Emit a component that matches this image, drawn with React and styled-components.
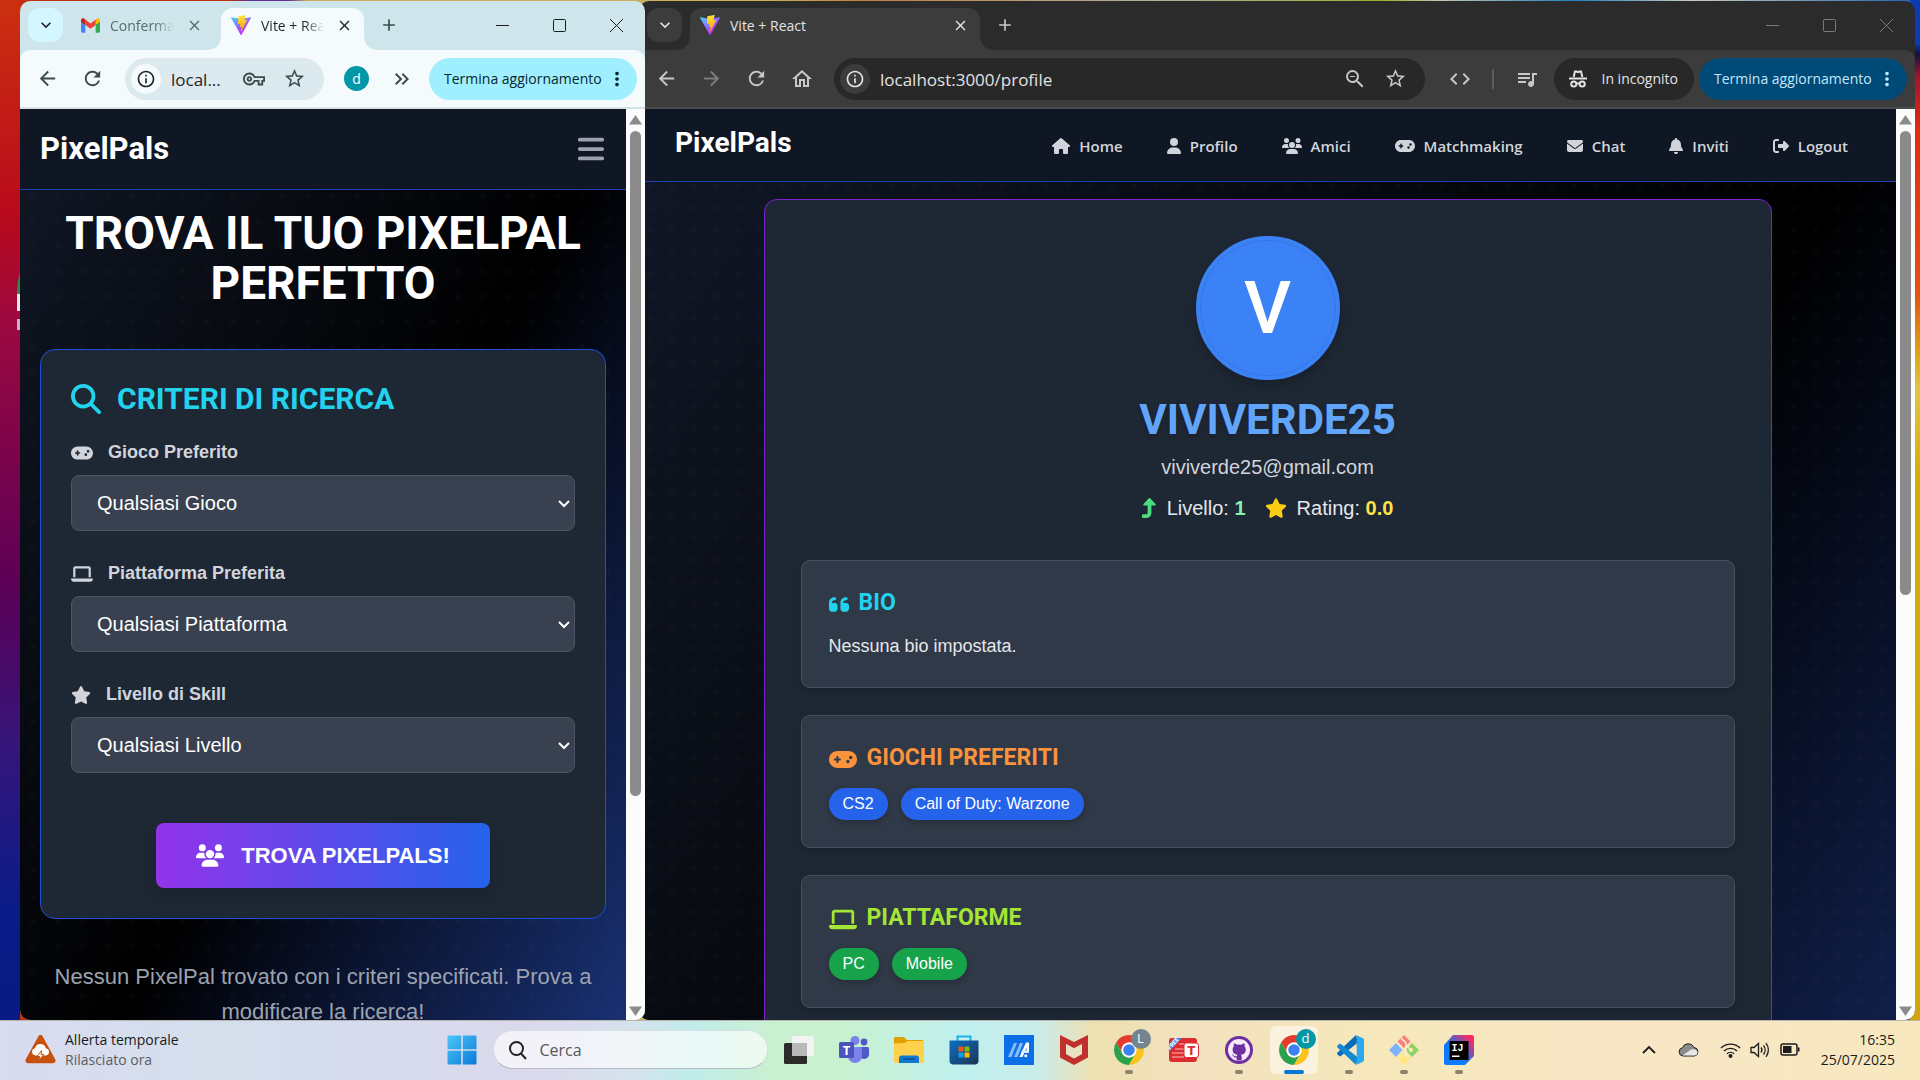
import React from 'react';
import styled, { createGlobalStyle, css } from 'styled-components';
import {
  FaHouse, FaUser, FaUsers, FaGamepad, FaEnvelope, FaBell, FaRightFromBracket,
  FaMagnifyingGlass, FaLaptop, FaStar, FaTurnUp, FaQuoteLeft, FaBars,
} from 'react-icons/fa6';
import {
  MdArrowBack, MdArrowForward, MdRefresh, MdOutlineHome, MdInfoOutline, MdStarBorder,
  MdOutlineVpnKey, MdKeyboardDoubleArrowRight, MdMoreVert, MdZoomOut, MdCode,
  MdQueueMusic, MdClose, MdAdd, MdExpandMore,
} from 'react-icons/md';
import { FaGithub } from 'react-icons/fa';

const ui = '"Open Sans", "Noto Sans", sans-serif';
const body = '"Liberation Sans", Arial, sans-serif';
const display = 'Roboto, "Liberation Sans", sans-serif';

const light = {
  strip: '#cee6eb', bar: '#f5fafd', line: '#d5e3e6', chip: '#d3f6ff', box: '#dce9ee',
  boxChip: '#f5fafd', icon: '#3c4b4f', faint: '#3c4b4f', text: '#1f2628', update: '#a0efff',
  updateText: '#06272e', control: '#1c1c1c',
};
const dark = {
  strip: '#2b2b2b', bar: '#3c3c3c', line: '#4a4c4c', chip: '#3c3c3c', box: '#282828',
  boxChip: '#3c3c3c', icon: '#c7c7c7', faint: '#7d7d7d', text: '#e3e3e3', update: '#004a77',
  updateText: '#c2e7ff', control: '#7a7a7a',
};

const Global = createGlobalStyle`
  *, *::before, *::after { box-sizing: border-box; }
  body { margin: 0; overflow: hidden; }
  button, input, select { font: inherit; color: inherit; border: 0; margin: 0; padding: 0; background: none; }
  button { cursor: pointer; }
  h1, h2, p, ul { margin: 0; padding: 0; }
  ul { list-style: none; }
  a { color: inherit; text-decoration: none; }
  svg { display: block; flex: none; }
`;

const Desktop = styled.div`
  position: relative;
  display: flex;
  flex-direction: column;
  height: 100vh;
  overflow: hidden;
  font-family: ${ui};
  background:
    linear-gradient(#cc3010, #b80a1c 20%, #9c0840 30%, #5c0056 54%, #35157a 69%, #0a1c88 84%, #061880) 0 0 / 20px 100% no-repeat,
    linear-gradient(#0b3cb4 0 4%, #10103c 5%, #a01430 7%, #e22c10 12%, #e65010 27%, #dda814 33%, #e0c444 36%, #d8ac06 44%, #d2a40c) 100% 0 / 10px 100% no-repeat,
    linear-gradient(90deg, #c03010 0 12%, #60309a 13% 15%, #c8b060 16% 40%, #c08040 45%, #b0b0a0 60%, #9cb030 72%, #c0c8b0 75%, #2080c0 82%, #c8ccc0 88%, #2060b0);
`;

const Shortcut = styled.div`
  position: absolute;
  left: 17px;
  top: 262px;
  width: 24px;
  height: 68px;
  background: linear-gradient(#2f8a4a 0 32px, #e8e8e8 32px 49px, transparent 49px 57px, #c8b0c8 57px);
  border-top-left-radius: 12px 32px;
`;

const Workspace = styled.main`
  position: relative;
  flex: 1;
  min-height: 0;
  display: grid;
  grid-template-columns: 125fr 254fr;
  padding: 1px 5px 0 20px;
`;

const Window = styled.section`
  position: relative;
  z-index: ${p => (p.$front ? 1 : 0)};
  margin-left: ${p => (p.$front ? '0' : '-6px')};
  display: flex;
  flex-direction: column;
  min-width: 0;
  min-height: 0;
  border-radius: 10px;
  overflow: hidden;
  background: ${p => p.$t.strip};
  color: ${p => p.$t.text};
`;

const TabStrip = styled.div`
  display: flex;
  height: 49px;
  padding: 7px 0 0 8px;
  flex: none;
`;

const TabSearch = styled.button`
  display: grid;
  place-items: center;
  width: 35px;
  height: 34px;
  margin-right: 8px;
  border-radius: 12px;
  background: ${p => p.$t.chip};
`;

const Tab = styled.div`
  position: relative;
  display: flex;
  align-items: center;
  gap: 10px;
  flex: 0 1 ${p => p.$w}px;
  min-width: 0;
  padding: 0 ${p => (p.$active ? 10 : 17)}px 8px 10px;
  font-size: 14px;
  border-radius: 12px 12px 0 0;
  color: ${p => (p.$active ? p.$t.text : '#5a6b70')};
  ${p => p.$active && css`
    background: ${p.$t.bar};
    &::before, &::after {
      content: '';
      position: absolute;
      bottom: 0;
      width: 12px;
      height: 12px;
    }
    &::before { left: -12px; background: radial-gradient(circle at 0 0, transparent 11px, ${p.$t.bar} 12px); }
    &::after { right: -12px; background: radial-gradient(circle at 100% 0, transparent 11px, ${p.$t.bar} 12px); }
  `}
`;

const TabTitle = styled.button`
  flex: 1;
  min-width: 0;
  overflow: hidden;
  white-space: nowrap;
  text-align: left;
  ${p => p.$fade && css`mask-image: linear-gradient(90deg, #000 70%, transparent);`}
`;

const IconButton = styled.button`
  display: grid;
  place-items: center;
  flex: none;
  width: ${p => p.$w || 45}px;
  height: ${p => p.$h || 42}px;
  color: ${p => p.$c || 'inherit'};
`;

const TabClose = styled.button`
  display: grid;
  place-items: center;
  width: 20px;
  height: 20px;
`;

const Controls = styled.div`
  display: flex;
  margin-left: auto;
  color: ${p => p.$t.control};
`;

const Toolbar = styled.div`
  display: flex;
  align-items: center;
  flex: none;
  height: 59px;
  padding: 0 8px 0 5px;
  border-bottom: 2px solid ${p => p.$t.line};
  border-radius: 10px 10px 0 0;
  background: ${p => p.$t.bar};
`;

const Omnibox = styled.form`
  display: flex;
  align-items: center;
  flex: 1;
  min-width: 0;
  height: 42px;
  margin: 0 ${p => p.$end}px 0 10px;
  padding: 0 10px 0 6px;
  border-radius: 21px;
  background: ${p => p.$t.box};
  color: ${p => p.$t.icon};
`;

const SiteInfo = styled.button`
  display: grid;
  place-items: center;
  flex: none;
  width: 30px;
  height: 30px;
  margin-right: 10px;
  border-radius: 50%;
  background: ${p => p.$t.boxChip};
  color: ${p => p.$t.text};
`;

const Address = styled.input`
  flex: 1;
  min-width: 0;
  padding-top: 2px;
  outline: none;
  font-size: 17px;
  color: ${p => p.$t.text};
`;

const Profile = styled.span`
  display: grid;
  place-items: center;
  width: 25px;
  height: 25px;
  border-radius: 50%;
  background: #0097a7;
  color: #fff;
  font-size: 14px;
`;

const Divider = styled.span`
  width: 2px;
  height: 20px;
  margin: 0 10px;
  background: #5c5c5c;
`;

const Pill = styled.button`
  display: flex;
  align-items: center;
  justify-content: space-between;
  flex: none;
  width: ${p => p.$w}px;
  height: 42px;
  margin-left: 5px;
  padding: 0 ${p => p.$end}px 0 15px;
  border-radius: 21px;
  background: ${p => p.$bg};
  color: ${p => p.$c};
  font-size: 14px;
  white-space: nowrap;
`;

const Viewport = styled.div`
  display: flex;
  flex: 1;
  min-height: 0;
`;

const Page = styled.div`
  flex: 1;
  min-width: 0;
  overflow: hidden;
`;

const PageCanvas = styled.div`
  display: flex;
  flex-direction: column;
  height: ${p => p.$h};
  font-family: ${body};
  color: #fff;
  background:
    radial-gradient(circle, rgba(120, 130, 150, 0.03) 2px, transparent 4px) 0 0 / ${p => p.$dot}px ${p => p.$dot}px,
    linear-gradient(to bottom right, #111827, #000 50%, #1e3a8a);
`;

const Glyph = styled.span`
  flex: none;
  svg { width: ${p => p.$w}px; height: ${p => p.$h}px; }
`;

const SiteHeader = styled.header`
  display: flex;
  align-items: center;
  justify-content: space-between;
  flex: none;
  height: ${p => p.$h}px;
  padding: ${p => p.$pad};
  background: #101724;
  border-bottom: 1px solid #1e40af;
`;

const Logo = styled.a`
  font: 700 ${p => p.$size}px/36px ${display};
`;

const Nav = styled.nav`
  display: flex;
  gap: 18px;
`;

const NavLink = styled.a`
  display: flex;
  align-items: center;
  gap: 9px;
  padding: 5px 13px 0;
  font: 600 15px/20px ${ui};
  color: #d1d5db;
`;

const MenuButton = styled.button`
  color: #9ca3af;
`;

const Search = styled.div`
  display: flex;
  flex-direction: column;
  padding: 18px 20px;
`;

const Headline = styled.h1`
  margin-bottom: 41px;
  font: 700 46px/50px ${display};
  text-align: center;
`;

const Panel = styled.form`
  display: flex;
  flex-direction: column;
  gap: 30px;
  padding: 30px;
  border: 1px solid #1d4ed8;
  border-radius: 15px;
  background: #1e2734;
`;

const PanelTitle = styled.h2`
  display: flex;
  align-items: center;
  gap: 16px;
  margin-bottom: -8px;
  font: 700 30px/38px ${display};
  color: #22d3ee;
`;

const Field = styled.div`
  display: flex;
  flex-direction: column;
  gap: 10px;
`;

const FieldLabel = styled.label`
  display: flex;
  align-items: center;
  gap: 15px;
  font: 700 18px/25px ${body};
  color: #d1d5db;
`;

const SelectBox = styled.div`
  display: grid;
  align-items: center;
  > * { grid-area: 1 / 1; }
  svg { justify-self: end; margin-right: 1px; pointer-events: none; }
`;

const Select = styled.select`
  width: 100%;
  height: 56px;
  padding: 0 25px;
  appearance: none;
  border: 1px solid #4b5563;
  border-radius: 8px;
  background: #394150;
  font: 400 20px/30px ${body};
  color: #fff;
`;

const Submit = styled.button`
  display: flex;
  align-items: center;
  gap: 17px;
  align-self: center;
  height: 65px;
  margin-top: 20px;
  padding: 0 40px;
  border-radius: 8px;
  background: linear-gradient(90deg, #9333ea, #2563eb);
  box-shadow: 0 8px 16px rgba(0, 0, 0, 0.15);
  font: 700 22px/35px ${body};
  color: #fff;
`;

const Empty = styled.p`
  margin-top: 40px;
  font-size: 22px;
  line-height: 35px;
  text-align: center;
  color: #9ca3af;
`;

const ProfileCard = styled.article`
  display: flex;
  flex-direction: column;
  align-items: center;
  flex: 1;
  width: calc(100% - 36px);
  max-width: 1008px;
  margin: 17px auto;
  padding: 36px;
  border: 1px solid #7e22ce;
  border-radius: 13px;
  background: #1e2734;
`;

const Avatar = styled.div`
  display: grid;
  place-items: center;
  width: 144px;
  height: 144px;
  margin-bottom: 17px;
  border: 4px solid #3b82f6;
  border-radius: 50%;
  background: #3b82f6;
  box-shadow: inset 0 0 0 1px #3874dd, 0 6px 12px rgba(0, 0, 0, 0.2);
  font: 500 73px/1 ${display};
`;

const Username = styled.h1`
  font: 700 42px/45px ${display};
  color: #60a5fa;
  text-shadow: 0 3px 5px rgba(0, 0, 0, 0.2);
`;

const Email = styled.p`
  margin: 11px 0 13px;
  font-size: 20px;
  line-height: 28px;
  color: #d1d5db;
`;

const Stats = styled.div`
  display: flex;
  gap: 19px;
  margin-bottom: 38px;
  font-size: 20px;
  line-height: 28px;
  color: #e5e7eb;
`;

const Stat = styled.div`
  display: flex;
  align-items: center;
  gap: 10px;
  svg { color: ${p => p.$icon}; }
  b { color: ${p => p.$value}; }
`;

const Sections = styled.div`
  display: flex;
  flex-direction: column;
  gap: 27px;
  align-self: stretch;
`;

const Section = styled.section`
  display: flex;
  flex-direction: column;
  gap: 15px;
  padding: 26px 27px 27px;
  border: 1px solid #475060;
  border-radius: 9px;
  background: #303948;
  box-shadow: 0 4px 8px rgba(0, 0, 0, 0.15);
  font-size: 18px;
  line-height: 27px;
  color: #e5e7eb;
`;

const SectionTitle = styled.h2`
  display: flex;
  align-items: center;
  gap: 10px;
  font: 700 23px/31px ${display};
  color: ${p => p.$c};
  ${Glyph} { margin-top: 4px; }
`;

const Chips = styled.ul`
  display: flex;
  gap: 13px;
`;

const Chip = styled.li`
  height: 32px;
  padding: 0 14px;
  border-radius: 16px;
  background: ${p => p.$bg};
  box-shadow: 0 3px 6px rgba(0, 0, 0, 0.2);
  font-size: 16px;
  line-height: 31px;
  color: #fff;
`;

const Scrollbar = styled.div`
  display: flex;
  flex-direction: column;
  align-items: center;
  flex: none;
  width: 19px;
  padding: 6px 0 4px;
  background: #fcfcfc;
`;

const Thumb = styled.span`
  width: 11px;
  margin-top: 6px;
  flex: ${p => p.$size} 0 0;
  border-radius: 6px;
  background: #8b8b8b;
`;

const Track = styled.span`
  flex: ${p => p.$size} 0 0;
`;

const Taskbar = styled.footer`
  position: relative;
  z-index: 2;
  display: grid;
  grid-template-columns: 1fr auto 1fr;
  align-items: center;
  flex: none;
  height: 60px;
  padding-bottom: 2px;
  border-top: 1px solid #b9b4b0;
  background: linear-gradient(90deg, #d9dbef, #d4dfec 12%, #d5dcee 18%, #dbd9ec 28%, #d5e2ec 33%, #bfecea 36%,
    #caf0d2 40%, #c8f1d0 44%, #c0f0ee 50%, #c8ecea 54%, #eee0b0 57%, #f2e1be 62%, #f6e8bb 72%, #f8e6c6 85%, #f7e8bf);
  font-size: 14px;
  line-height: 20px;
  color: #1b1b1b;
`;

const Weather = styled.button`
  display: flex;
  align-items: center;
  gap: 9px;
  justify-self: start;
  padding-left: 25px;
  text-align: left;
  span { display: block; }
  span + span { color: #5c5c60; }
`;

const Apps = styled.div`
  display: flex;
  align-items: center;
  gap: 7px;
`;

const App = styled.button`
  display: flex;
  flex-direction: column;
  align-items: center;
  position: relative;
  width: 48px;
  height: 48px;
  padding-top: 9px;
  border-radius: 6px;
  background: ${p => (p.$active ? 'rgba(255, 255, 255, 0.5)' : 'none')};
  &::after {
    content: '';
    width: ${p => (p.$active ? 20 : 8)}px;
    height: 4px;
    margin-top: 5px;
    border-radius: 2px;
    background: ${p => (p.$active ? '#0078d4' : p.$open ? '#8c8169' : 'transparent')};
  }
`;

const Badge = styled.span`
  position: absolute;
  right: 2px;
  top: 3px;
  width: 20px;
  height: 20px;
  border-radius: 50%;
  background: ${p => p.$bg};
  font-size: 13px;
  line-height: 19px;
  color: #fff;
`;

const SearchBox = styled.label`
  display: flex;
  align-items: center;
  gap: 12px;
  width: 275px;
  height: 39px;
  padding: 0 14px;
  border-radius: 20px;
  border: 1px solid rgba(160, 170, 190, 0.3);
  border-bottom-color: rgba(120, 130, 150, 0.5);
  background: rgba(255, 255, 255, 0.65);
  input { width: 100%; min-width: 0; outline: none; font-size: 16px; }
  input::placeholder { color: #55585c; opacity: 1; }
`;

const Tray = styled.div`
  display: flex;
  align-items: center;
  justify-self: end;
  padding-right: 25px;
`;

const TrayIcons = styled.div`
  display: flex;
  align-items: center;
  gap: ${p => p.$gap}px;
  margin-right: 21px;
`;

const Clock = styled.time`
  text-align: right;
  span { display: block; }
`;

const ViteLogo = ({ id }) => (
  <svg width="20" height="20" viewBox="0 0 256 257">
    <defs>
      <linearGradient id={id + 'a'} x1="-.828%" x2="57.636%" y1="7.652%" y2="78.411%"><stop offset="0" stopColor="#41d1ff" /><stop offset="1" stopColor="#bd34fe" /></linearGradient>
      <linearGradient id={id + 'b'} x1="43.376%" x2="50.316%" y1="2.242%" y2="89.03%"><stop offset="0" stopColor="#ffea83" /><stop offset=".083" stopColor="#ffdd35" /><stop offset="1" stopColor="#ffa800" /></linearGradient>
    </defs>
    <path fill={`url(#${id}a)`} d="M255.153 37.938L134.897 252.976c-2.483 4.44-8.862 4.466-11.382.048L.875 37.958c-2.746-4.814 1.371-10.646 6.827-9.67l120.385 21.517a6.537 6.537 0 0 0 2.322-.004l117.867-21.483c5.438-.991 9.574 4.796 6.877 9.62Z" />
    <path fill={`url(#${id}b)`} d="M185.432.063L96.44 17.501a3.268 3.268 0 0 0-2.634 3.014l-5.474 92.456a3.268 3.268 0 0 0 3.997 3.378l24.777-5.718c2.318-.535 4.413 1.507 3.936 3.838l-7.361 36.047c-.495 2.426 1.782 4.5 4.151 3.78l15.304-4.649c2.372-.72 4.652 1.36 4.15 3.788l-11.698 56.621c-.732 3.542 3.979 5.473 5.943 2.437l1.313-2.028l72.516-144.72c1.215-2.423-.88-5.186-3.54-4.672l-25.505 4.922c-2.396.462-4.435-1.77-3.759-4.114l16.646-57.705c.677-2.35-1.37-4.583-3.769-4.113Z" />
  </svg>
);

const GmailLogo = () => (
  <svg width="19" height="15" viewBox="0 0 24 18">
    <path fill="#4285f4" d="M0 3v13.4C0 17.3.7 18 1.6 18h3.9V7z" />
    <path fill="#34a853" d="M18.5 18h3.9c.9 0 1.6-.7 1.6-1.6V3l-5.500 4z" />
    <path fill="#fbbc04" d="M18.500 1.500v6.800L24 4.200V2.500C24 .4 21.600-.8 19.900.5z" />
    <path fill="#ea4335" d="M5.500 8.300V1.500L12 6.400l6.500-4.900v6.800L12 13.200z" />
    <path fill="#c5221f" d="M0 2.500v1.700l5.500 4.100V1.500L4.100.5C2.400-.8 0 .4 0 2.500z" />
  </svg>
);

const IncognitoIcon = () => (
  <svg width="18" height="18" viewBox="0 0 18 18" fill="none" stroke="currentColor" strokeWidth="2">
    <path d="M4.600 7 6 1.500h1.500L9 2.200l1.500-.7H12L13.400 7" />
    <path d="M0 8.500h18" />
    <circle cx="4.800" cy="14" r="2.600" /><circle cx="13.200" cy="14" r="2.600" /><path d="M7.400 13.500h3.200" />
  </svg>
);

const Minimize = () => <svg width="13" height="13" viewBox="0 0 13 13" stroke="currentColor"><path d="M0 6.500h13" /></svg>;
const Maximize = () => <svg width="13" height="13" viewBox="0 0 13 13" stroke="currentColor" fill="none"><rect x=".5" y=".5" width="12" height="12" rx="1" /></svg>;
const Cross = () => <svg width="13" height="13" viewBox="0 0 13 13" stroke="currentColor"><path d="M0 0l13 13M13 0L0 13" /></svg>;
const UpTriangle = () => <svg width="13" height="10" viewBox="0 0 13 10"><path fill="#8b8b8b" d="M6.500 0 13 9.500H0z" /></svg>;
const DownTriangle = () => <svg width="13" height="10" viewBox="0 0 13 10"><path fill="#8b8b8b" d="M6.500 10 13 .5H0z" /></svg>;
const SelectArrow = () => <svg width="20" height="20" viewBox="0 0 20 20" fill="none" stroke="#fff" strokeWidth="2"><path d="m5 8 5 5 5-5" /></svg>;

const WeatherIcon = () => (
  <svg width="31" height="29" viewBox="0 0 31 29">
    <path fill="#c8500f" d="M13.300 1.500c.9-1.900 3.500-1.900 4.400 0l12.500 22.800c1 2-.2 4-2.300 4H3.100c-2.100 0-3.300-2-2.300-4z" />
    <path fill="#fff" d="M10.500 20.500a3.700 3.700 0 0 1-.5-7.300 5.600 5.600 0 0 1 10.800 0 3.700 3.700 0 0 1 .2 7.300z" />
    <path fill="#fff" stroke="#c8500f" strokeWidth="1" d="m16.500 15.500-4.500 6h2.800l-1.500 4.500 5.500-6.500H16z" />
  </svg>
);

const WindowsLogo = () => (
  <svg width="30" height="30" viewBox="0 0 30 30">
    <defs><linearGradient id="win" x1="0" y1="0" x2="1" y2="1" gradientUnits="objectBoundingBox"><stop stopColor="#4cc6f8" /><stop offset="1" stopColor="#0b7bd6" /></linearGradient></defs>
    <path fill="url(#win)" d="M1.500.5h12.700v13.700H.5V1.500zM15.800.5h12.700l1 1v12.700H15.800zM.5 15.800h13.700v13.700H1.500l-1-1zM15.800 15.800h13.700v12.700l-1 1H15.800z" />
  </svg>
);

const TaskViewIcon = () => (
  <svg width="30" height="30" viewBox="0 0 30 30">
    <rect x="0" y="8" width="23" height="21" rx="1.500" fill="#2b2b29" />
    <rect x="8" y="1" width="22" height="20" rx="1.500" fill="#f3f3f3" />
    <rect x="8" y="8" width="15" height="13" fill="#b9b9b9" />
  </svg>
);
const TeamsIcon = () => (
  <svg width="30" height="30" viewBox="0 0 30 30">
    <circle cx="25" cy="7" r="3.400" fill="#5059c9" /><circle cx="16" cy="5.500" r="4.500" fill="#7b83eb" />
    <path fill="#5059c9" d="M19 12h9.500c.9 0 1.500.6 1.500 1.500V19a5 5 0 0 1-9 3z" />
    <path fill="#7b83eb" d="M9 12h13c.6 0 1 .5 1 1v8a7 7 0 0 1-14 0z" />
    <rect x="0" y="7" width="15" height="16" rx="1.500" fill="#4b53bc" />
    <text x="7.500" y="20" textAnchor="middle" fontSize="13" fontWeight="700" fill="#fff" fontFamily="Open Sans">T</text>
  </svg>
);
const ExplorerIcon = () => (
  <svg width="30" height="30" viewBox="0 0 30 30">
    <path fill="#e0a100" d="M0 3.500C0 2.700.7 2 1.500 2H10l3 3h15c.8 0 1.500.7 1.500 1.500V12H0z" />
    <path fill="#ffd04c" d="M0 8.500 11 8l2-2h17v20.500c0 .8-.7 1.500-1.500 1.500h-27C.7 28 0 27.300 0 26.500z" />
    <path fill="#0f79cf" d="M5 28v-5c0-1.500 1-2.500 2.500-2.500h15c1.500 0 2.500 1 2.500 2.500v5z" />
    <path stroke="#0a4f94" strokeWidth="1.500" d="M9 24h12" />
  </svg>
);
const StoreIcon = () => (
  <svg width="30" height="30" viewBox="0 0 30 30">
    <defs><linearGradient id="store" x1="0" y1="0" x2="1" y2="1"><stop stopColor="#0d6fc0" /><stop offset="1" stopColor="#1d3355" /></linearGradient></defs>
    <path fill="none" stroke="#1fb0f0" strokeWidth="2" d="M8.500 7V1.500h13V7" />
    <path fill="url(#store)" d="M.5 5.500h29V26c0 2-1.500 3.500-3.500 3.500H4C2 29.500.5 28 .5 26z" />
    <path fill="#f25022" d="M9.500 11.500h5v5h-5z" /><path fill="#7fba00" d="M15.500 11.500h5v5h-5z" /><path fill="#00a4ef" d="M9.500 17.500h5v5h-5z" /><path fill="#ffb900" d="M15.500 17.500h5v5h-5z" />
  </svg>
);
const AsusIcon = () => (
  <svg width="30" height="30" viewBox="0 0 30 30">
    <path fill="#0b6fe8" d="M0 0h30v30H0z" />
    <path fill="#8cbcf8" d="m4 22 6-14h3L7.500 22zM10 22l6-14h3l-5.500 14z" />
    <path fill="#fff" d="M15.500 22 22 7.500h3V18h-2.500v-5.500L18.500 22z" /><path fill="#dcebff" d="M17.500 15.500H25V18h-7.500z" /><circle cx="21.800" cy="20.800" r="1.500" fill="#fff" />
  </svg>
);
const McAfeeIcon = () => (
  <svg width="30" height="30" viewBox="0 0 30 30">
    <path fill="#c0302f" fillRule="evenodd" d="M1 0 15 7 29 0v22.500L15 30 1 22.500zM7 9v10l8 4.500 8-4.500V9l-8 4.200z" />
    <path fill="#f1e2c0" opacity=".5" d="m7 9 8 4.200L23 9v10l-8 4.500L7 19z" />
  </svg>
);
const ChromeIcon = () => (
  <svg width="30" height="30" viewBox="4 4 40 40">
    <path fill="#e33b2e" d="M6.700 14A20 20 0 0 1 41.300 14H24A10 10 0 0 0 15.300 29z" />
    <path fill="#2ba24c" d="M6.700 14 15.300 29A10 10 0 0 0 32.700 29L24 44A20 20 0 0 1 6.700 14z" />
    <path fill="#fcc31e" d="M41.300 14A20 20 0 0 1 24 44L32.700 29A10 10 0 0 0 24 14z" />
    <circle cx="24" cy="24" r="10" fill="#fff" /><circle cx="24" cy="24" r="7.700" fill="#3b82ee" />
  </svg>
);
const FreeTIcon = () => (
  <svg width="30" height="30" viewBox="0 0 30 30">
    <rect x="0" y="3" width="28" height="24" rx="3" fill="#dd2c2f" />
    <path stroke="#f58b8b" strokeWidth="1.500" d="M10 9h14M6 14h10M3 18h12M3 22h12" />
    <path fill="#3f7ee8" d="M0 17V9l6-6h7z" />
    <text x="1" y="15" fontSize="6" fontWeight="700" fill="#fff" fontFamily="Roboto" transform="rotate(-48 1 15)">FREE</text>
    <rect x="15" y="8" width="14.500" height="14.500" rx="2.500" fill="#fff" stroke="#dd2c2f" />
    <text x="22.300" y="20" textAnchor="middle" fontSize="13" fontWeight="900" fill="#dd2c2f" fontFamily="Roboto">T</text>
  </svg>
);
const GithubIcon = () => (
  <svg width="30" height="30" viewBox="0 0 30 30">
    <circle cx="15" cy="15" r="14" fill="#6e2fa3" />
    <circle cx="15" cy="15" r="11" fill="#f6ecfb" />
    <path fill="#6e2fa3" d="M12.600 25.500v-3c-2.500.5-3.300-1-3.800-2-.4-.7-.9-.9-1.300-1.300 1.800-.4 2.500 2 3.700 2.200.6.100 1.300 0 1.600-.300.100-.600.400-1 .700-1.300-3.300-.4-4.900-1.900-4.900-5.200 0-1.300.4-2.300 1.200-3.100-.3-.9-.2-2 .2-3 1.200 0 2.200.6 3 1.200a9.500 9.500 0 0 1 4.400 0c.8-.6 1.800-1.200 3-1.200.4 1 .5 2.100.2 3 .8.8 1.200 1.800 1.200 3.100 0 3.300-1.600 4.800-4.900 5.200.5.500.8 1.200.8 2.300v3.400z" />
  </svg>
);
const CodeIcon = () => (
  <svg width="30" height="30" viewBox="0 0 30 30">
    <path fill="#0a6cb8" d="M22 0 3.500 17.500a1.300 1.300 0 0 0 0 1.900l1.700 1.500c.5.400 1.200.400 1.700 0L24 7.500z" />
    <path fill="#1488d0" d="M22 30 3.500 12.500a1.300 1.300 0 0 1 0-1.900l1.700-1.500c.5-.4 1.200-.4 1.700 0L24 22.500z" />
    <path fill="#2aa9f2" d="m22 0 6.900 3.200c.7.300 1.100 1 1.100 1.700v20.200c0 .7-.4 1.400-1.100 1.700L22 30c.6-.5.700-1 .7-1.700V1.700C22.700 1 22.500.5 22 0z" />
  </svg>
);
const GitIcon = () => (
  <svg width="30" height="30" viewBox="0 0 30 30">
    <path fill="#f98080" d="m15 0 6.500 6.500L15 13 8.500 6.500z" /><path fill="#80b3ff" d="m7 8 6.500 7L7 22 0 15z" />
    <path fill="#8fd460" d="m23 8 7 7-7 7-6.500-7z" /><path fill="#ffe680" d="m15 17 6.500 6.500L15 30l-6.500-6.500z" />
    <path stroke="#fbecc4" strokeWidth="1.500" fill="none" d="m12 3 5 5v14M17 10l5 5" /><circle cx="17" cy="20" r="2" fill="#fbecc4" /><circle cx="22" cy="15" r="2" fill="#fbecc4" />
  </svg>
);
const IdeaIcon = () => (
  <svg width="30" height="30" viewBox="0 0 30 30">
    <defs><linearGradient id="idea" x1="0" y1="1" x2="1" y2="0"><stop offset=".4" stopColor="#0b7cff" /><stop offset=".65" stopColor="#8050b0" /><stop offset=".9" stopColor="#ff2860" /></linearGradient></defs>
    <path fill="url(#idea)" d="M9 0h19c1 0 2 1 2 2v19l-9 9H2c-1 0-2-1-2-2V10z" />
    <path d="M5.500 6h19v19h-19z" />
    <text x="7.500" y="15.500" fontSize="10" fontWeight="700" fill="#fff" fontFamily="Liberation Mono">IJ</text>
    <path fill="#fff" d="M8 20.500h7.500V22H8z" />
  </svg>
);

const taskbarApps = [
  { name: 'Visualizzazione attività', Icon: TaskViewIcon },
  { name: 'Teams', Icon: TeamsIcon },
  { name: 'Esplora file', Icon: ExplorerIcon },
  { name: 'Store', Icon: StoreIcon },
  { name: 'MyASUS', Icon: AsusIcon },
  { name: 'McAfee', Icon: McAfeeIcon },
  { name: 'Chrome L', Icon: ChromeIcon, open: true, badge: 'L', color: '#74858f' },
  { name: 'Convertitore', Icon: FreeTIcon },
  { name: 'GitHub', Icon: GithubIcon, open: true },
  { name: 'Chrome d', Icon: ChromeIcon, active: true, badge: 'd', color: '#0097a7' },
  { name: 'Code', Icon: CodeIcon, open: true },
  { name: 'Git', Icon: GitIcon, open: true },
  { name: 'IntelliJ', Icon: IdeaIcon, open: true },
];

const navLinks = [
  ['Home', FaHouse, 18], ['Profilo', FaUser, 14], ['Amici', FaUsers, 20], ['Matchmaking', FaGamepad, 20],
  ['Chat', FaEnvelope, 16], ['Inviti', FaBell, 14], ['Logout', FaRightFromBracket, 16],
];

const fields = [
  { id: 'gioco', label: 'Gioco Preferito', Icon: FaGamepad, w: 22, value: 'Qualsiasi Gioco' },
  { id: 'piattaforma', label: 'Piattaforma Preferita', Icon: FaLaptop, w: 22, value: 'Qualsiasi Piattaforma' },
  { id: 'livello', label: 'Livello di Skill', Icon: FaStar, w: 20, value: 'Qualsiasi Livello' },
];

const WindowControls = ({ t }) => (
  <Controls $t={t}>
    <IconButton $w={57} $h={34} aria-label="Riduci"><Minimize /></IconButton>
    <IconButton $w={57} $h={34} aria-label="Ingrandisci"><Maximize /></IconButton>
    <IconButton $w={57} $h={34} aria-label="Chiudi"><Cross /></IconButton>
  </Controls>
);

const Scroll = ({ size }) => (
  <Scrollbar aria-hidden="true">
    <UpTriangle />
    <Thumb $size={size} />
    <Track $size={100 - size} />
    <DownTriangle />
  </Scrollbar>
);

const UpdatePill = ({ t }) => (
  <Pill $w={208} $end={9} $bg={t.update} $c={t.updateText}>
    Termina aggiornamento <MdMoreVert size={22} />
  </Pill>
);

const SearchWindow = () => (
  <Window $t={light} $front>
    <TabStrip>
      <TabSearch $t={light} aria-label="Cerca schede"><MdExpandMore size={20} /></TabSearch>
      <Tab $t={light} $w={150}>
        <GmailLogo />
        <TabTitle $fade>Conferma</TabTitle>
        <TabClose aria-label="Chiudi scheda"><MdClose size={17} /></TabClose>
      </Tab>
      <Tab $t={light} $w={143} $active>
        <ViteLogo id="v1" />
        <TabTitle $fade>Vite + React</TabTitle>
        <TabClose aria-label="Chiudi scheda"><MdClose size={17} /></TabClose>
      </Tab>
      <IconButton $w={50} $h={34} $c={light.icon} aria-label="Nuova scheda"><MdAdd size={20} /></IconButton>
      <WindowControls t={light} />
    </TabStrip>
    <Toolbar $t={light}>
      <IconButton $c={light.icon} aria-label="Indietro"><MdArrowBack size={23} /></IconButton>
      <IconButton $c={light.icon} aria-label="Ricarica"><MdRefresh size={23} /></IconButton>
      <Omnibox $t={light} $end={10}>
        <SiteInfo type="button" $t={light} aria-label="Informazioni sito"><MdInfoOutline size={20} /></SiteInfo>
        <Address $t={light} aria-label="Indirizzo" defaultValue="local..." />
        <IconButton type="button" $w={40} aria-label="Password"><MdOutlineVpnKey size={22} /></IconButton>
        <IconButton type="button" $w={40} aria-label="Preferiti"><MdStarBorder size={23} /></IconButton>
      </Omnibox>
      <IconButton aria-label="Profilo"><Profile>d</Profile></IconButton>
      <IconButton $c={light.icon} aria-label="Altro"><MdKeyboardDoubleArrowRight size={24} /></IconButton>
      <UpdatePill t={light} />
    </Toolbar>
    <Viewport>
      <Page>
        <PageCanvas $h="120%" $dot={25}>
          <SiteHeader $h={81} $pad="0 20px 0 20px">
            <Logo href="#" $size={31}>PixelPals</Logo>
            <MenuButton aria-label="Menu"><FaBars size={30} /></MenuButton>
          </SiteHeader>
          <Search>
            <Headline>TROVA IL TUO PIXELPAL PERFETTO</Headline>
            <Panel>
              <PanelTitle><FaMagnifyingGlass size={30} />CRITERI DI RICERCA</PanelTitle>
              {fields.map(({ id, label, Icon, w, value }) => (
                <Field key={id}>
                  <FieldLabel htmlFor={id}><Glyph $w={w} $h={18}><Icon /></Glyph>{label}</FieldLabel>
                  <SelectBox>
                    <Select id={id}><option>{value}</option></Select>
                    <SelectArrow />
                  </SelectBox>
                </Field>
              ))}
              <Submit type="button"><Glyph $w={28} $h={23}><FaUsers /></Glyph>TROVA PIXELPALS!</Submit>
            </Panel>
            <Empty>Nessun PixelPal trovato con i criteri specificati. Prova a modificare la ricerca!</Empty>
          </Search>
        </PageCanvas>
      </Page>
      <Scroll size={76} />
    </Viewport>
  </Window>
);

const ProfileWindow = () => (
  <Window $t={dark}>
    <TabStrip>
      <TabSearch $t={dark} aria-label="Cerca schede"><MdExpandMore size={20} /></TabSearch>
      <Tab $t={dark} $w={290} $active>
        <ViteLogo id="v2" />
        <TabTitle>Vite + React</TabTitle>
        <TabClose aria-label="Chiudi scheda"><MdClose size={17} /></TabClose>
      </Tab>
      <IconButton $w={50} $h={34} $c={dark.icon} aria-label="Nuova scheda"><MdAdd size={20} /></IconButton>
      <WindowControls t={dark} />
    </TabStrip>
    <Toolbar $t={dark}>
      <IconButton $c={dark.icon} aria-label="Indietro"><MdArrowBack size={23} /></IconButton>
      <IconButton $c={dark.faint} aria-label="Avanti"><MdArrowForward size={23} /></IconButton>
      <IconButton $c={dark.icon} aria-label="Ricarica"><MdRefresh size={23} /></IconButton>
      <IconButton $c={dark.icon} aria-label="Pagina iniziale"><MdOutlineHome size={24} /></IconButton>
      <Omnibox $t={dark} $end={12}>
        <SiteInfo type="button" $t={dark} aria-label="Informazioni sito"><MdInfoOutline size={20} /></SiteInfo>
        <Address $t={dark} aria-label="Indirizzo" defaultValue="localhost:3000/profile" />
        <IconButton type="button" $w={40} aria-label="Zoom"><MdZoomOut size={24} /></IconButton>
        <IconButton type="button" $w={40} aria-label="Preferiti"><MdStarBorder size={23} /></IconButton>
      </Omnibox>
      <IconButton $c={dark.icon} aria-label="Estensione"><MdCode size={24} /></IconButton>
      <Divider />
      <IconButton $c={dark.icon} aria-label="Contenuti multimediali"><MdQueueMusic size={24} /></IconButton>
      <Pill $w={140} $end={16} $bg="#282828" $c={dark.text}><IncognitoIcon />In incognito</Pill>
      <UpdatePill t={dark} />
    </Toolbar>
    <Viewport>
      <Page>
        <PageCanvas $h="188%" $dot={22}>
          <SiteHeader $h={73} $pad="0 35px 4px 36px">
            <Logo href="#" $size={28}>PixelPals</Logo>
            <Nav>
              {navLinks.map(([label, Icon, w]) => (
                <NavLink key={label} href="#"><Glyph $w={w} $h={16}><Icon /></Glyph>{label}</NavLink>
              ))}
            </Nav>
          </SiteHeader>
          <ProfileCard>
            <Avatar>V</Avatar>
            <Username>VIVIVERDE25</Username>
            <Email>viviverde25@gmail.com</Email>
            <Stats>
              <Stat $icon="#4ade80" $value="#86efac"><Glyph $w={15} $h={20}><FaTurnUp /></Glyph><span>Livello: <b>1</b></span></Stat>
              <Stat $icon="#facc15" $value="#fde047"><Glyph $w={22} $h={20}><FaStar /></Glyph><span>Rating: <b>0.0</b></span></Stat>
            </Stats>
            <Sections>
              <Section>
                <SectionTitle $c="#22d3ee"><Glyph $w={20} $h={23}><FaQuoteLeft /></Glyph>BIO</SectionTitle>
                <p>Nessuna bio impostata.</p>
              </Section>
              <Section>
                <SectionTitle $c="#fb923c"><Glyph $w={28} $h={23}><FaGamepad /></Glyph>GIOCHI PREFERITI</SectionTitle>
                <Chips><Chip $bg="#2563eb">CS2</Chip><Chip $bg="#2563eb">Call of Duty: Warzone</Chip></Chips>
              </Section>
              <Section>
                <SectionTitle $c="#a3e635"><Glyph $w={28} $h={23}><FaLaptop /></Glyph>PIATTAFORME</SectionTitle>
                <Chips><Chip $bg="#16a34a">PC</Chip><Chip $bg="#16a34a">Mobile</Chip></Chips>
              </Section>
            </Sections>
          </ProfileCard>
        </PageCanvas>
      </Page>
      <Scroll size={53} />
    </Viewport>
  </Window>
);

export default function Root() {
  return (
    <Desktop>
      <Global />
      <Shortcut />
      <Workspace>
        <SearchWindow />
        <ProfileWindow />
      </Workspace>
      <Taskbar>
        <Weather>
          <WeatherIcon />
          <div><span>Allerta temporale</span><span>Rilasciato ora</span></div>
        </Weather>
        <Apps>
          <App aria-label="Start"><WindowsLogo /></App>
          <SearchBox>
            <svg width="20" height="20" viewBox="0 0 20 20" fill="none" stroke="#222" strokeWidth="2"><circle cx="8.500" cy="8.500" r="6.500" /><path d="m13 13.500 5 5.500" /></svg>
            <input type="search" placeholder="Cerca" aria-label="Cerca" />
          </SearchBox>
          {taskbarApps.map(({ name, Icon, open, active, badge, color }) => (
            <App key={name} aria-label={name} $open={open} $active={active}>
              <Icon />
              {badge && <Badge $bg={color}>{badge}</Badge>}
            </App>
          ))}
        </Apps>
        <Tray>
          <TrayIcons $gap={22}>
            <svg width="14" height="9" viewBox="0 0 14 9" fill="none" stroke="#1b1b1b" strokeWidth="1.800"><path d="m1 8 6-6 6 6" /></svg>
            <svg width="21" height="15" viewBox="0 0 21 15"><path d="M5 14a4.200 4.200 0 0 1-.5-8.300A6.200 6.200 0 0 1 16 5.500 4.300 4.300 0 0 1 16.500 14z" fill="#8c8c8c" stroke="#1b1b1b" /><path d="M4.500 13.400 13 7.500c3-1 6.500 0 6.500 3 0 2-1.500 2.900-3 2.900z" fill="#e6e6e6" /></svg>
          </TrayIcons>
          <TrayIcons $gap={9}>
            <svg width="21" height="16" viewBox="0 0 21 16" fill="none" stroke="#1b1b1b" strokeWidth="1.400"><path d="M1 6a13.500 13.500 0 0 1 19 0M4 9a9.300 9.300 0 0 1 13 0M7 11.800a5 5 0 0 1 7 0" /><circle cx="10.500" cy="14" r="1.300" fill="#1b1b1b" /></svg>
            <svg width="21" height="16" viewBox="0 0 21 16" fill="none" stroke="#1b1b1b" strokeWidth="1.300"><path d="M1 5.500h3L8.500 1.500v13L4 10.500H1zM11 5.500a4 4 0 0 1 0 5M13.500 3.500a7 7 0 0 1 0 9M16 1.200a11 11 0 0 1 0 13.600" /></svg>
            <svg width="20" height="13" viewBox="0 0 20 13" fill="none" stroke="#1b1b1b" strokeWidth="1.500"><rect x="1" y="1" width="16" height="11" rx="2" /><path fill="#1b1b1b" stroke="none" d="M3 3h8.500v7H3zM18 4.500h1.500v4H18z" /></svg>
          </TrayIcons>
          <Clock><span>16:35</span><span>25/07/2025</span></Clock>
        </Tray>
      </Taskbar>
    </Desktop>
  );
}
